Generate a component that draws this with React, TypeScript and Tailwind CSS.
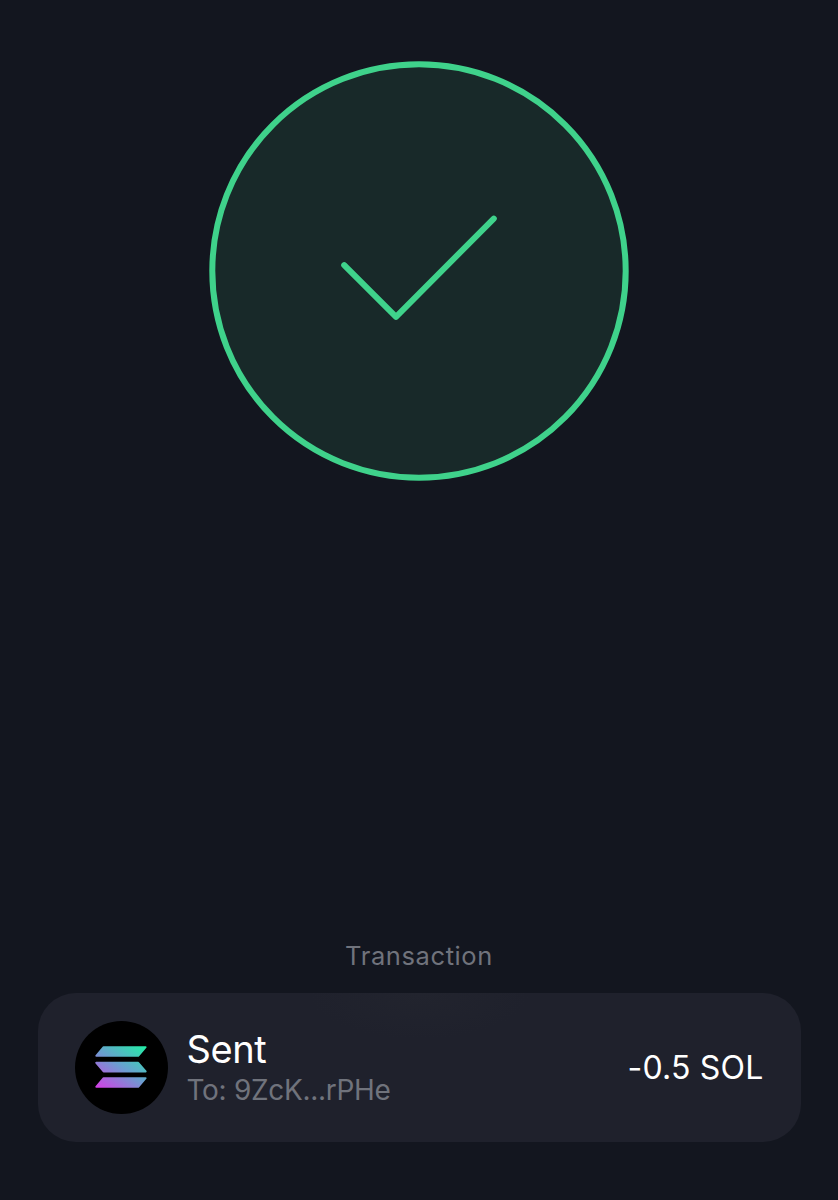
import React from 'react';

const SuccessMark = () => (
  <svg className="h-[420px] w-[420px]" viewBox="0 0 420 420" fill="none">
    <circle cx="210" cy="210" r="206.7" fill="#182929" stroke="#3fd28b" strokeWidth="6" />
    <path
      d="M135.2 204.2 187 255.8 284.8 157.6"
      stroke="#3fd28b"
      strokeWidth="6"
      strokeLinecap="round"
      strokeLinejoin="round"
    />
  </svg>
);

const SolanaLogo = () => (
  <div className="flex size-[93px] shrink-0 items-center justify-center rounded-full bg-black">
    <svg className="mb-px h-[42px] w-[52px]" viewBox="0 0 52 42">
      <defs>
        <linearGradient id="solana" gradientUnits="userSpaceOnUse" x1="45" y1="-5" x2="9" y2="47">
          <stop offset="0" stopColor="#1ff0a4" />
          <stop offset="0.5" stopColor="#6a9fd0" />
          <stop offset="1" stopColor="#d53ee6" />
        </linearGradient>
      </defs>
      <g fill="url(#solana)" stroke="url(#solana)" strokeWidth="2" strokeLinejoin="round">
        <path d="M8.6 1.2H50.6L43.2 9.8H1.3Z" />
        <path d="M1.3 16.8H43.2L50.6 25.4H8.6Z" />
        <path d="M8.6 32.2H50.6L43.2 40.8H1.3Z" />
      </g>
    </svg>
  </div>
);

const TransactionCard = () => (
  <div className="flex h-[149px] items-center rounded-[38px] bg-[#1f212c] bg-[radial-gradient(ellipse_110px_46px_at_50%_0%,#22242e,#1f212c)] px-[37px]">
    <SolanaLogo />
    <div className="ml-[19px] flex flex-col">
      <span className="text-[38px] leading-[44px] tracking-[-0.4px] text-white">Sent</span>
      <span className="text-[28px] leading-[38px] tracking-[-0.3px] text-[#70737c]">To: 9ZcK...rPHe</span>
    </div>
    <span className="ml-auto text-[32px] leading-[40px] tracking-[0.2px] text-white">-0.5 SOL</span>
  </div>
);

export default function App() {
  return (
    <main className="flex h-[1200px] w-[838px] flex-col bg-[#13161f] px-[37.5px] pt-[61px] pb-[58px] font-['Inter',sans-serif]">
      <div className="flex justify-center">
        <SuccessMark />
      </div>
      <section className="mt-auto">
        <h2 className="mb-[21px] text-center text-[25.5px] leading-[32px] tracking-[0.6px] text-[#70737c]">
          Transaction
        </h2>
        <TransactionCard />
      </section>
    </main>
  );
}
